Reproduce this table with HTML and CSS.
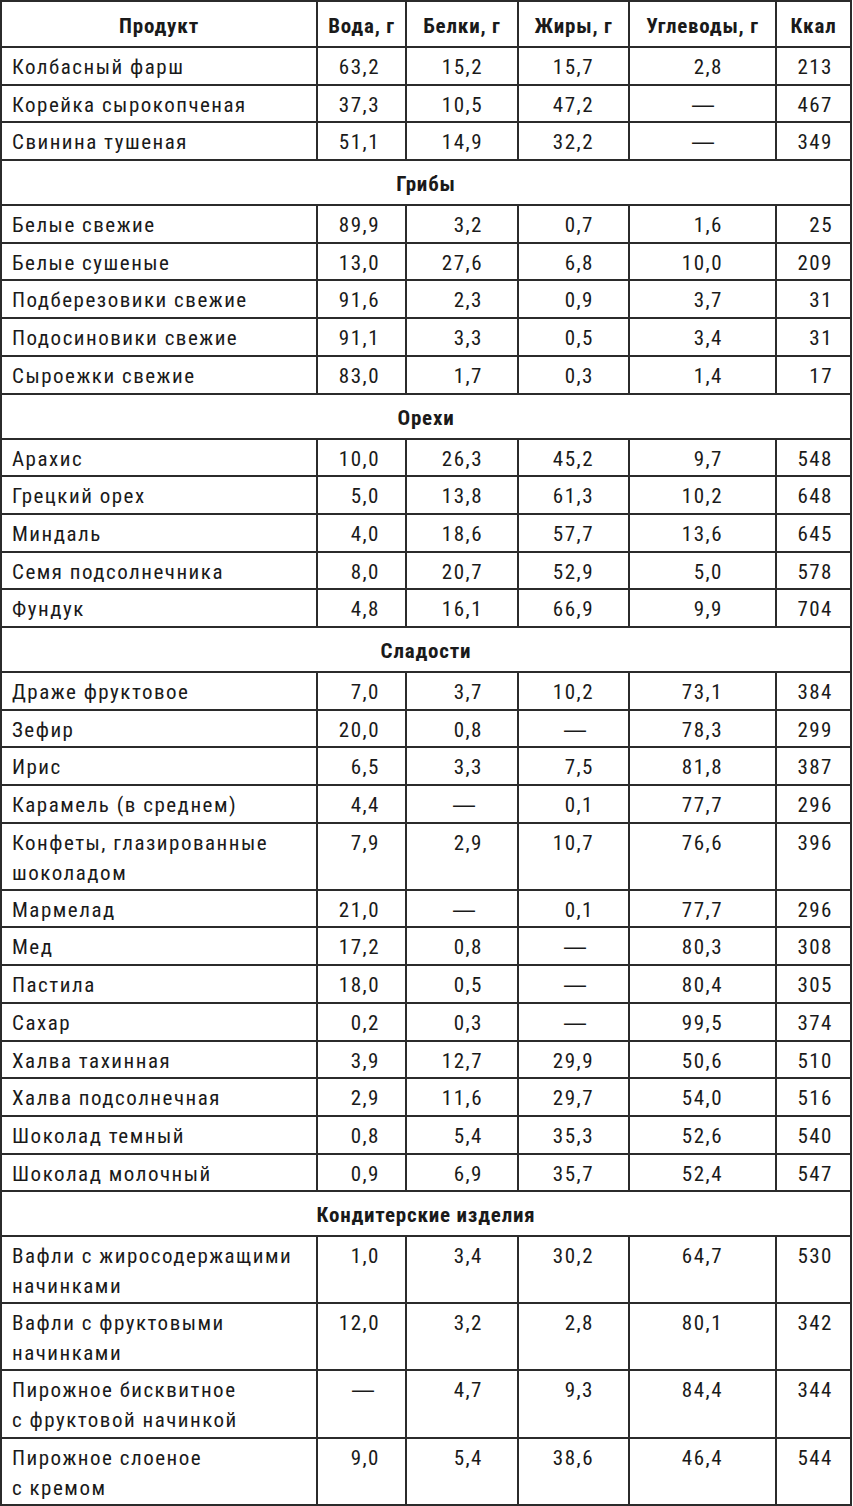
FILE: index.html
```html
<!DOCTYPE html>
<html lang="ru">
<head>
<meta charset="utf-8">
<title>Пищевая ценность продуктов</title>
<link rel="stylesheet" href="styles.css">
</head>
<body>
<div class="table">
  <div class="th">Продукт</div><div class="th">Вода, г</div><div class="th">Белки, г</div><div class="th">Жиры, г</div><div class="th">Углеводы, г</div><div class="th">Ккал</div>

  <div class="name">Колбасный фарш</div><div class="num c2">63,2</div><div class="num c3">15,2</div><div class="num c4">15,7</div><div class="num c5">2,8</div><div class="num c6">213</div>
  <div class="name">Корейка сырокопченая</div><div class="num c2">37,3</div><div class="num c3">10,5</div><div class="num c4">47,2</div><div class="num c5 dash">—</div><div class="num c6">467</div>
  <div class="name">Свинина тушеная</div><div class="num c2">51,1</div><div class="num c3">14,9</div><div class="num c4">32,2</div><div class="num c5 dash">—</div><div class="num c6">349</div>

  <div class="section">Грибы</div>
  <div class="name">Белые свежие</div><div class="num c2">89,9</div><div class="num c3">3,2</div><div class="num c4">0,7</div><div class="num c5">1,6</div><div class="num c6">25</div>
  <div class="name">Белые сушеные</div><div class="num c2">13,0</div><div class="num c3">27,6</div><div class="num c4">6,8</div><div class="num c5">10,0</div><div class="num c6">209</div>
  <div class="name">Подберезовики свежие</div><div class="num c2">91,6</div><div class="num c3">2,3</div><div class="num c4">0,9</div><div class="num c5">3,7</div><div class="num c6">31</div>
  <div class="name">Подосиновики свежие</div><div class="num c2">91,1</div><div class="num c3">3,3</div><div class="num c4">0,5</div><div class="num c5">3,4</div><div class="num c6">31</div>
  <div class="name">Сыроежки свежие</div><div class="num c2">83,0</div><div class="num c3">1,7</div><div class="num c4">0,3</div><div class="num c5">1,4</div><div class="num c6">17</div>

  <div class="section">Орехи</div>
  <div class="name">Арахис</div><div class="num c2">10,0</div><div class="num c3">26,3</div><div class="num c4">45,2</div><div class="num c5">9,7</div><div class="num c6">548</div>
  <div class="name">Грецкий орех</div><div class="num c2">5,0</div><div class="num c3">13,8</div><div class="num c4">61,3</div><div class="num c5">10,2</div><div class="num c6">648</div>
  <div class="name">Миндаль</div><div class="num c2">4,0</div><div class="num c3">18,6</div><div class="num c4">57,7</div><div class="num c5">13,6</div><div class="num c6">645</div>
  <div class="name">Семя подсолнечника</div><div class="num c2">8,0</div><div class="num c3">20,7</div><div class="num c4">52,9</div><div class="num c5">5,0</div><div class="num c6">578</div>
  <div class="name">Фундук</div><div class="num c2">4,8</div><div class="num c3">16,1</div><div class="num c4">66,9</div><div class="num c5">9,9</div><div class="num c6">704</div>

  <div class="section">Сладости</div>
  <div class="name">Драже фруктовое</div><div class="num c2">7,0</div><div class="num c3">3,7</div><div class="num c4">10,2</div><div class="num c5">73,1</div><div class="num c6">384</div>
  <div class="name">Зефир</div><div class="num c2">20,0</div><div class="num c3">0,8</div><div class="num c4 dash">—</div><div class="num c5">78,3</div><div class="num c6">299</div>
  <div class="name">Ирис</div><div class="num c2">6,5</div><div class="num c3">3,3</div><div class="num c4">7,5</div><div class="num c5">81,8</div><div class="num c6">387</div>
  <div class="name">Карамель (в среднем)</div><div class="num c2">4,4</div><div class="num c3 dash">—</div><div class="num c4">0,1</div><div class="num c5">77,7</div><div class="num c6">296</div>
  <div class="name two">Конфеты, глазированные<br>шоколадом</div><div class="num c2 two">7,9</div><div class="num c3 two">2,9</div><div class="num c4 two">10,7</div><div class="num c5 two">76,6</div><div class="num c6 two">396</div>
  <div class="name">Мармелад</div><div class="num c2">21,0</div><div class="num c3 dash">—</div><div class="num c4">0,1</div><div class="num c5">77,7</div><div class="num c6">296</div>
  <div class="name">Мед</div><div class="num c2">17,2</div><div class="num c3">0,8</div><div class="num c4 dash">—</div><div class="num c5">80,3</div><div class="num c6">308</div>
  <div class="name">Пастила</div><div class="num c2">18,0</div><div class="num c3">0,5</div><div class="num c4 dash">—</div><div class="num c5">80,4</div><div class="num c6">305</div>
  <div class="name">Сахар</div><div class="num c2">0,2</div><div class="num c3">0,3</div><div class="num c4 dash">—</div><div class="num c5">99,5</div><div class="num c6">374</div>
  <div class="name">Халва тахинная</div><div class="num c2">3,9</div><div class="num c3">12,7</div><div class="num c4">29,9</div><div class="num c5">50,6</div><div class="num c6">510</div>
  <div class="name">Халва подсолнечная</div><div class="num c2">2,9</div><div class="num c3">11,6</div><div class="num c4">29,7</div><div class="num c5">54,0</div><div class="num c6">516</div>
  <div class="name">Шоколад темный</div><div class="num c2">0,8</div><div class="num c3">5,4</div><div class="num c4">35,3</div><div class="num c5">52,6</div><div class="num c6">540</div>
  <div class="name">Шоколад молочный</div><div class="num c2">0,9</div><div class="num c3">6,9</div><div class="num c4">35,7</div><div class="num c5">52,4</div><div class="num c6">547</div>

  <div class="section">Кондитерские изделия</div>
  <div class="name two">Вафли с жиросодержащими<br>начинками</div><div class="num c2 two">1,0</div><div class="num c3 two">3,4</div><div class="num c4 two">30,2</div><div class="num c5 two">64,7</div><div class="num c6 two">530</div>
  <div class="name two">Вафли с фруктовыми<br>начинками</div><div class="num c2 two">12,0</div><div class="num c3 two">3,2</div><div class="num c4 two">2,8</div><div class="num c5 two">80,1</div><div class="num c6 two">342</div>
  <div class="name two">Пирожное бисквитное<br>с фруктовой начинкой</div><div class="num c2 two dash">—</div><div class="num c3 two">4,7</div><div class="num c4 two">9,3</div><div class="num c5 two">84,4</div><div class="num c6 two">344</div>
  <div class="name two">Пирожное слоеное<br>с кремом</div><div class="num c2 two">9,0</div><div class="num c3 two">5,4</div><div class="num c4 two">38,6</div><div class="num c5 two">46,4</div><div class="num c6 two">544</div>
</div>
</body>
</html>
```
FILE: styles.css
```css
html, body {
  margin: 0;
  padding: 0;
  background: #ffffff;
}

.table {
  display: grid;
  grid-template-columns: 316px 89px 112px 111px 147px 75px;
  width: 852px;
  box-sizing: border-box;
  border-left: 2px solid #2b2b2b;
  border-top: 2px solid #2b2b2b;
  font-family: "Roboto", "Liberation Sans", sans-serif;
  font-stretch: 85%;
  font-size: 21px;
  line-height: 30px;
  letter-spacing: 1.5px;
  color: #1a1a1a;
}

.table > div {
  box-sizing: border-box;
  border-right: 2px solid #2b2b2b;
  border-bottom: 2px solid #2b2b2b;
  padding: 4px 0 1.7px;
  white-space: nowrap;
}

.table > .two {
  padding-bottom: 1.1px;
}

.table > .th {
  font-weight: 700;
  text-align: center;
  letter-spacing: 0.8px;
  padding: 9px 0 5px;
}

.table > .name {
  padding-left: 10px;
}

.table > .num {
  text-align: right;
}

.table > .c2 { padding-right: 25px; }
.table > .c3 { padding-right: 34px; }
.table > .c4 { padding-right: 34px; }
.table > .c5 { padding-right: 52px; }
.table > .c6 { padding-right: 17px; }

.table > .dash {
  font-family: "Liberation Sans", "Roboto", sans-serif;
  font-stretch: 100%;
  font-size: 22px;
  letter-spacing: 0;
}
.table > .c2.dash { padding-right: 31px; }
.table > .c3.dash { padding-right: 42px; }
.table > .c4.dash { padding-right: 42px; }
.table > .c5.dash { padding-right: 61px; }

.table > .section {
  grid-column: 1 / -1;
  font-weight: 700;
  text-align: center;
  letter-spacing: 0.8px;
  padding: 8px 0 5px;
}
```
